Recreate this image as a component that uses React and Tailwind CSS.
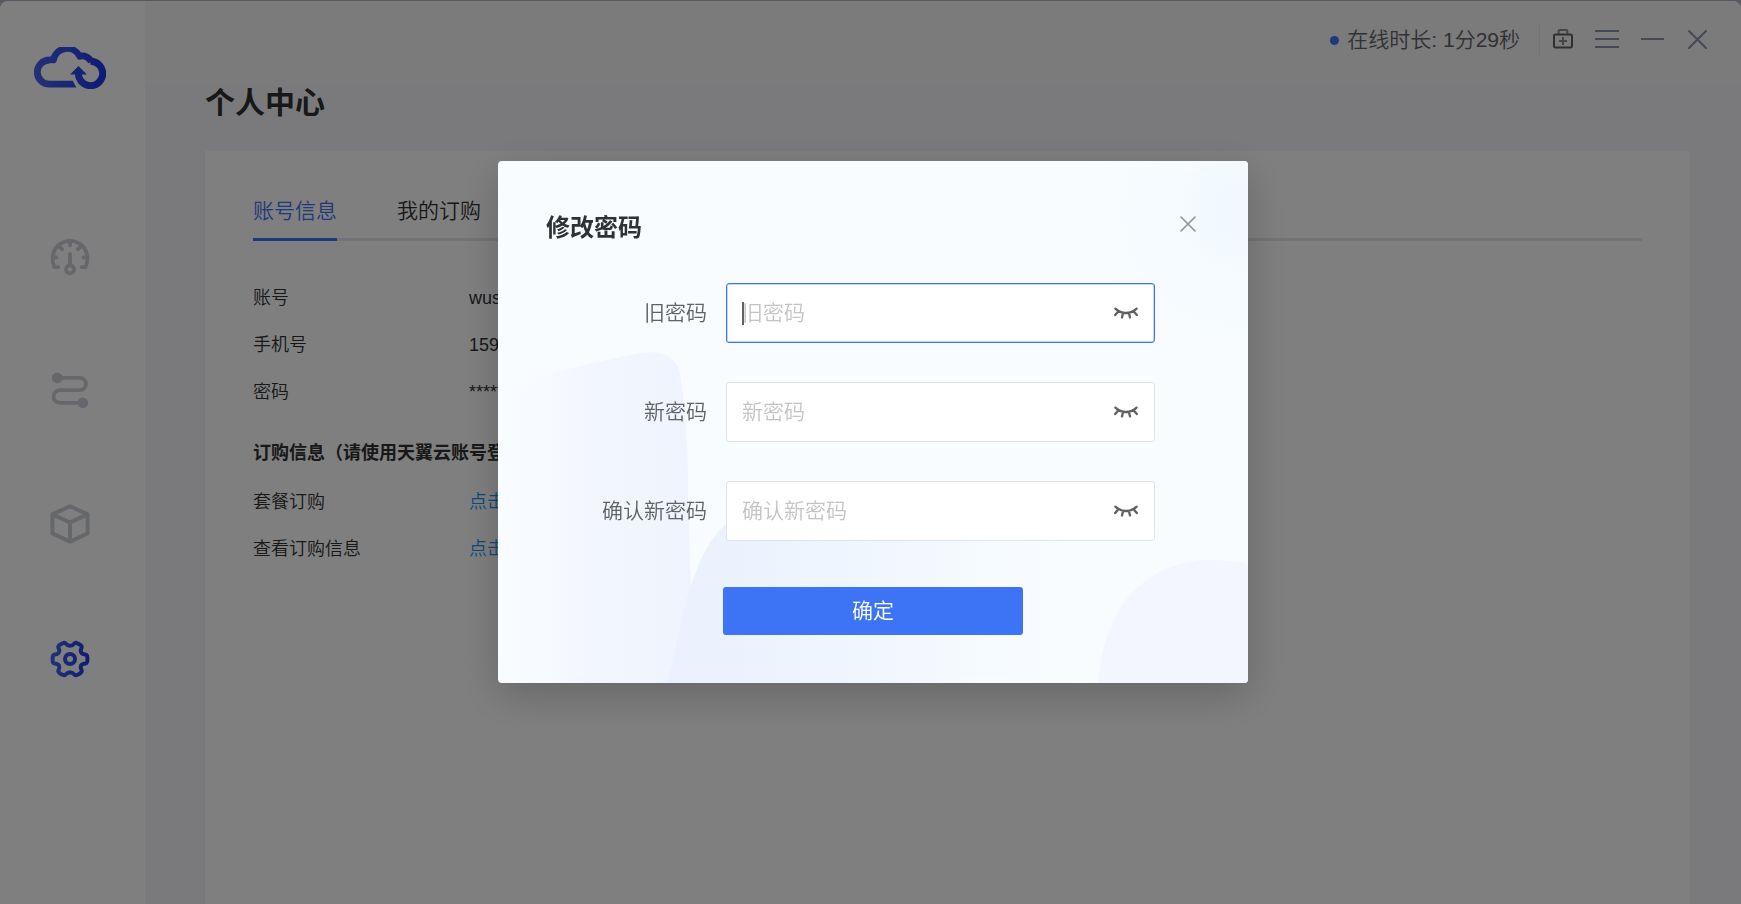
import { useState } from 'react'

const navItems = [
  { id: 'speed', label: '加速', icon: GaugeIcon },
  { id: 'route', label: '线路', icon: RouteIcon },
  { id: 'package', label: '套餐', icon: CubeIcon },
  { id: 'settings', label: '设置', icon: GearIcon },
]

const accountRows = [
  { label: '账号', value: 'wus' },
  { label: '手机号', value: '159' },
  { label: '密码', value: '*****' },
]

const orderRows = ['套餐订购', '查看订购信息']

const fields = [
  { id: 'oldPassword', label: '旧密码' },
  { id: 'newPassword', label: '新密码' },
  { id: 'confirmPassword', label: '确认新密码' },
]

function Logo() {
  return (
    <svg className="w-[72px] h-[42px]" viewBox="0 0 72 42" fill="none">
      <defs>
        <linearGradient id="logoBlue" x1="0" y1="0" x2="72" y2="0" gradientUnits="userSpaceOnUse">
          <stop offset="0" stopColor="#4664ea" />
          <stop offset="1" stopColor="#1c36ea" />
        </linearGradient>
      </defs>
      <g stroke="url(#logoBlue)" strokeWidth="6.8">
        <path d="M15.4 37.2A12.1 12.1 0 0 1 15.4 13Q17.6 12.6 19.4 12.9A14 14 0 0 1 45.7 9.3A9.6 9.6 0 0 1 57.4 15.2" strokeLinejoin="round" />
        <path d="M56.5 14.3A12.2 12.2 0 1 1 44.6 24" strokeWidth="7" />
      </g>
      <path d="M15 33.8H38.8L42.4 40.6H15Z" fill="url(#logoBlue)" />
      <path d="M44.4 19L53 27.4H36Z" fill="url(#logoBlue)" />
    </svg>
  )
}

function GaugeIcon() {
  return (
    <svg className="w-10 h-10" viewBox="0 -1 40 40" fill="none" stroke="currentColor" strokeWidth="3.8" strokeLinecap="round" strokeLinejoin="round">
      <path d="M8.2 29.2H4.4C3.2 26.4 2.6 23.4 2.6 20.2A17.4 17.4 0 0 1 37.4 20.2C37.4 23.4 36.8 26.4 35.6 29.2H31.8" />
      <path d="M20 4V7.4M9 8.4L12 11.2M31 8.4L28 11.2M3.6 19.4H6.4M36.4 19.4H33.6M20 15.8V26" />
      <circle cx="20" cy="31.4" r="4" />
    </svg>
  )
}

function RouteIcon() {
  return (
    <svg className="w-10 h-10" viewBox="0 0 40 40" fill="none" stroke="currentColor" strokeWidth="3.8">
      <path d="M7.3 6.8H29.8A6.2 6.2 0 0 1 29.8 19.2H9.8A6.2 6.2 0 0 0 9.8 31.8H32.7" />
      <circle cx="7.3" cy="6.8" r="5.4" fill="currentColor" stroke="none" />
      <circle cx="32.7" cy="31.8" r="5.4" fill="currentColor" stroke="none" />
    </svg>
  )
}

function CubeIcon() {
  return (
    <svg className="w-10 h-10 overflow-visible" viewBox="0 1 40 40" fill="none" stroke="currentColor" strokeWidth="4" strokeLinejoin="round">
      <path d="M20 2.2L37.6 10.4V29.4L20 37.6L2.4 29.4V10.4ZM2.4 10.4L20 18.4L37.6 10.4M20 18.4V37.6" />
    </svg>
  )
}

function GearIcon() {
  return (
    <svg className="w-10 h-10" viewBox="0 0 40 38" fill="none" stroke="url(#gearBlue)" strokeWidth="4" strokeLinejoin="round">
      <defs>
        <linearGradient id="gearBlue" x1="0" y1="0" x2="40" y2="0" gradientUnits="userSpaceOnUse">
          <stop offset="0" stopColor="#4664ea" />
          <stop offset="1" stopColor="#1c36ea" />
        </linearGradient>
      </defs>
      <path d="M37.1 15.9Q37.9 19 37.1 22.1Q36.8 23.2 35.4 23.4Q33 23.6 32.1 24.4Q30.8 25.4 30.7 26.8Q30.8 28.8 31.7 30.4Q32.1 31.6 31.1 32.4Q28.9 34.4 26.2 35.2Q25 35.5 24.2 34.4Q22.8 32.4 20 32.2Q17.2 32.4 15.8 34.4Q15 35.5 13.8 35.2Q11.1 34.4 8.9 32.4Q7.9 31.6 8.3 30.4Q9.2 28.8 9.3 26.8Q9.2 25.4 7.9 24.4Q7 23.6 4.6 23.4Q3.2 23.2 2.9 22.1Q2.1 19 2.9 15.9Q3.2 14.8 4.6 14.6Q7 14.4 7.9 13.6Q9.2 12.6 9.3 11.2Q9.2 9.2 8.3 7.6Q7.9 6.4 8.9 5.6Q11.1 3.6 13.8 2.8Q15 2.5 15.8 3.6Q17.2 5.6 20 5.8Q22.8 5.6 24.2 3.6Q25 2.5 26.2 2.8Q28.9 3.6 31.1 5.6Q32.1 6.4 31.7 7.6Q30.8 9.2 30.7 11.2Q30.8 12.6 32.1 13.6Q33 14.4 35.4 14.6Q36.8 14.8 37.1 15.9Z" />
      <circle cx="20" cy="19" r="5" />
    </svg>
  )
}

function ClosedEyeIcon() {
  return (
    <svg className="w-6 h-6" viewBox="0 0 24 24" fill="none" stroke="currentColor" strokeWidth="2.3" strokeLinecap="round">
      <path d="M1.4 7.6Q6 12 12 12T22.6 7.6M4.4 10.2L1.2 14M19.6 10.2L22.8 14M9 12.2L8 16.4M15 12.2L16 16.4" />
    </svg>
  )
}

function Sidebar() {
  return (
    <aside className="w-[145px] shrink-0 bg-white flex flex-col items-center pt-[46px] pr-[5px]">
      <Logo />
      <nav className="mt-[148px] flex flex-col gap-[94px]">
        {navItems.map(({ id, label, icon: Icon }) => (
          <button key={id} type="button" aria-label={label} className="text-[#cccfd6]">
            <Icon />
          </button>
        ))}
      </nav>
    </aside>
  )
}

function TitleBar() {
  return (
    <header className="h-[84px] pr-8 pt-[23px] flex justify-end items-start bg-[#f6f6f6] text-[#8b93a9]">
      <div className="h-8 flex items-center text-[21px] text-[#606266]">
        <span className="w-[9px] h-[9px] mr-2 rounded-full bg-[#3e72f6]" />
        <span>在线时长: 1分29秒</span>
      </div>
      <span className="w-px h-8 ml-[19px] mr-[10px] bg-[#e8e8ec]" />
      <div className="h-[30px] flex items-center gap-[21px]">
        <button type="button" aria-label="工具箱">
          <svg className="w-6 h-6" viewBox="0 0 24 24" fill="none" strokeWidth="2">
            <path d="M8.6 7V4.4Q8.6 3 10 3H16Q17.4 3 17.4 4.4V7" stroke="#8c8c8c" />
            <rect x="4" y="7.4" width="18" height="13.2" rx="1.4" stroke="#606060" />
            <path d="M13 10V18M9 14H17" stroke="#8c8c8c" />
          </svg>
        </button>
        <button type="button" aria-label="菜单">
          <svg className="w-6 h-6" viewBox="0 0 24 24" stroke="currentColor" strokeWidth="2">
            <path d="M0 4H24M0 12H24M0 20H24" />
          </svg>
        </button>
        <button type="button" aria-label="最小化">
          <svg className="w-6 h-6" viewBox="0 0 24 24" stroke="currentColor" strokeWidth="2">
            <path d="M1 12H24" />
          </svg>
        </button>
        <button type="button" aria-label="关闭">
          <svg className="w-6 h-6" viewBox="0 0 24 24" stroke="currentColor" strokeWidth="2" strokeLinecap="round">
            <path d="M4 4L21 21M21 4L4 21" />
          </svg>
        </button>
      </div>
    </header>
  )
}

function InfoRow({ label, children }) {
  return (
    <div className="flex h-[47px] items-center text-lg">
      <dt className="w-[216px]">{label}</dt>
      <dd>{children}</dd>
    </div>
  )
}

function AccountPage() {
  return (
    <main className="flex-1 flex flex-col pl-[60px] pr-[51px]">
      <h1 className="h-[66px] text-[30px] leading-9 font-bold text-[#303133]">个人中心</h1>
      <section className="flex-1 bg-white px-12 pt-9 text-[#303133]">
        <div className="flex items-start gap-[60px] border-b-3 border-[#e4e7ed] text-[21px] leading-[48px]">
          <button type="button" className="-mb-[3px] pb-[3px] border-b-3 border-[#3e72f6] text-[#3e72f6]">账号信息</button>
          <button type="button">我的订购</button>
        </div>
        <dl className="mt-[33px]">
          {accountRows.map((row) => (
            <InfoRow key={row.label} label={row.label}>{row.value}</InfoRow>
          ))}
        </dl>
        <h2 className="mt-6 mb-[11px] text-lg font-bold">订购信息（请使用天翼云账号登</h2>
        <dl>
          {orderRows.map((label) => (
            <InfoRow key={label} label={label}>
              <a href="#" className="text-[#2090ff]">点击</a>
            </InfoRow>
          ))}
        </dl>
      </section>
    </main>
  )
}

function ModalBackground() {
  return (
    <svg className="absolute inset-0 w-full h-full" viewBox="0 0 750 522" preserveAspectRatio="none">
      <defs>
        <linearGradient id="blockFill" x1="0" x2="1">
          <stop offset="0" stopColor="#f8fcff" stopOpacity="0" />
          <stop offset="0.2" stopColor="#f6f9fe" stopOpacity="0.5" />
          <stop offset="0.45" stopColor="#f3f6fe" />
          <stop offset="1" stopColor="#eef4fe" />
        </linearGradient>
        <linearGradient id="waveFill" x1="0" x2="1">
          <stop offset="0" stopColor="#eaf0fd" />
          <stop offset="0.3" stopColor="#edf4fe" />
          <stop offset="0.6" stopColor="#f3f8fe" />
          <stop offset="1" stopColor="#f8fcff" stopOpacity="0" />
        </linearGradient>
        <radialGradient id="glowFill" cx="740" cy="50" r="170" gradientUnits="userSpaceOnUse">
          <stop offset="0" stopColor="#eff8ff" />
          <stop offset="1" stopColor="#f8fcff" stopOpacity="0" />
        </radialGradient>
      </defs>
      <rect width="750" height="522" fill="url(#glowFill)" />
      <path d="M0 232L60 210L132 194Q175 184 182 212Q191 270 190 340L192 400L196 522H0Z" fill="url(#blockFill)" />
      <path d="M170 522L188 440Q200 400 212 382Q232 350 270 345H600V522Z" fill="url(#waveFill)" />
      <path d="M600 522Q604 470 630 436Q666 396 722 399Q738 400 750 403V522Z" fill="#f3f6fe" />
    </svg>
  )
}

function PasswordField({ id, label, active }) {
  const [value, setValue] = useState('')
  const [visible, setVisible] = useState(false)

  return (
    <div className="flex items-center gap-[19px]">
      <label htmlFor={id} className="w-[161px] text-right text-[21px] text-[#606266]">{label}</label>
      <div className={`relative flex-1 h-[60px] flex items-center bg-white border rounded-[3px] ${active ? 'border-[#3e72f6] inset-shadow-[0_0_0_1px_#c4d4fc]' : 'border-[#dfe2ea]'}`}>
        <input
          id={id}
          type={visible ? 'text' : 'password'}
          value={value}
          onChange={(e) => setValue(e.target.value)}
          placeholder={label}
          className="peer flex-1 min-w-0 h-full pl-[15px] text-[21px] text-[#606266] placeholder:text-[#c4c4c4] outline-none"
        />
        {active && <span className="absolute left-[15px] w-[2px] h-[23px] bg-[#606266] peer-focus:hidden" />}
        <button type="button" aria-label="显示密码" onClick={() => setVisible(!visible)} className="mr-4 text-[#606060]">
          <ClosedEyeIcon />
        </button>
      </div>
    </div>
  )
}

function ChangePasswordModal({ onClose }) {
  return (
    <div className="fixed inset-0 bg-black/50 flex justify-center items-start pt-[161px] pl-[5px]">
      <div role="dialog" aria-labelledby="modalTitle" className="relative w-[750px] max-w-full rounded-[4px] overflow-hidden bg-[#f8fcff] shadow-[0_12px_40px_rgba(0,0,0,0.2)]">
        <ModalBackground />
        <form className="relative pt-12 pb-12" onSubmit={(e) => e.preventDefault()}>
          <div className="px-12 flex justify-between items-start">
            <h2 id="modalTitle" className="text-2xl leading-[38px] font-bold text-[#303133]">修改密码</h2>
            <button type="button" aria-label="关闭" onClick={onClose} className="py-1 text-[#909399]">
              <svg className="w-6 h-6" viewBox="0 0 24 24" stroke="currentColor" strokeWidth="1.6" strokeLinecap="round">
                <path d="M5 4L19 18M19 4L5 18" />
              </svg>
            </button>
          </div>
          <div className="mt-9 pl-12 pr-[93px] flex flex-col gap-[39px]">
            {fields.map((field, i) => (
              <PasswordField key={field.id} id={field.id} label={field.label} active={i === 0} />
            ))}
          </div>
          <button type="submit" className="block w-[300px] h-12 mt-[46px] mx-auto rounded-[3px] bg-[#3d74f6] text-[21px] text-white">
            确定
          </button>
        </form>
      </div>
    </div>
  )
}

function App() {
  const [isModalOpen, setIsModalOpen] = useState(true)

  return (
    <div className="min-h-screen flex pt-px bg-[#b2b0be] font-[350] font-['Liberation_Sans','Noto_Sans_CJK_SC',sans-serif]">
      <div className="flex-1 flex rounded-t-lg overflow-hidden bg-[#f5f5f9]">
        <Sidebar />
        <div className="flex-1 flex flex-col">
          <TitleBar />
          <AccountPage />
        </div>
      </div>
      {isModalOpen && <ChangePasswordModal onClose={() => setIsModalOpen(false)} />}
    </div>
  )
}

export default App
